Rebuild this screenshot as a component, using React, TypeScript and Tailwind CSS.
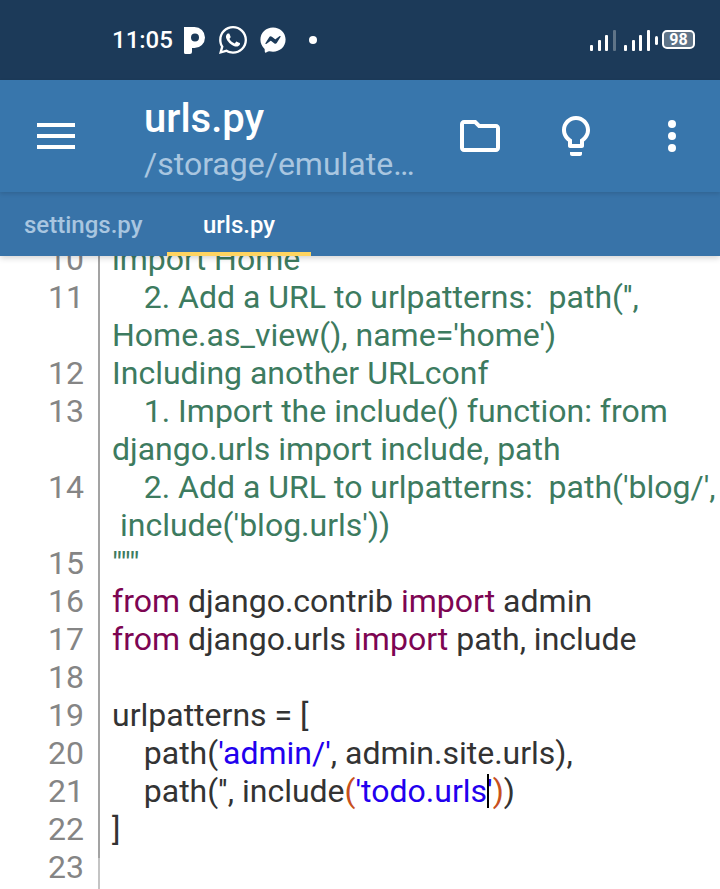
import React from 'react';
import { FaWhatsapp, FaFacebookMessenger } from 'react-icons/fa';

type Seg = { t: string; c?: string };

const GREEN = 'text-[#3d7b5f]';
const DARK = 'text-[#333333]';
const PURPLE = 'text-[#7d0552]';
const BLUE = 'text-[#2200ee]';
const ORANGE = 'text-[#c8501c]';

const green = (t: string): Seg[] => [{ t, c: GREEN }];

const lines: { n?: number; segs: Seg[] }[] = [
  { n: 10, segs: green('import Home') },
  { n: 11, segs: green("    2. Add a URL to urlpatterns:  path('',") },
  { segs: green("Home.as_view(), name='home')") },
  { n: 12, segs: green('Including another URLconf') },
  { n: 13, segs: green('    1. Import the include() function: from') },
  { segs: green('django.urls import include, path') },
  { n: 14, segs: green("    2. Add a URL to urlpatterns:  path('blog/',") },
  { segs: green(" include('blog.urls'))") },
  { n: 15, segs: green('"""') },
  { n: 16, segs: [{ t: 'from', c: PURPLE }, { t: ' django.contrib ' }, { t: 'import', c: PURPLE }, { t: ' admin' }] },
  { n: 17, segs: [{ t: 'from', c: PURPLE }, { t: ' django.urls ' }, { t: 'import', c: PURPLE }, { t: ' path, include' }] },
  { n: 18, segs: [] },
  { n: 19, segs: [{ t: 'urlpatterns = [' }] },
  { n: 20, segs: [{ t: '    path(' }, { t: "'admin/'", c: BLUE }, { t: ', admin.site.urls),' }] },
  {
    n: 21,
    segs: [
      { t: "    path('', include" },
      { t: '(', c: ORANGE },
      { t: "'todo.urls", c: BLUE },
      { t: 'CURSOR' },
      { t: "'", c: BLUE },
      { t: ')', c: ORANGE },
      { t: ')' },
    ],
  },
  { n: 22, segs: [{ t: ']' }] },
  { n: 23, segs: [] },
];

const SignalBars = ({ last }: { last: string }) => (
  <svg width="27" height="21" viewBox="0 0 27 21" fill="white">
    <rect x="0" y="15" width="3" height="6" rx="1" />
    <rect x="8" y="10" width="3" height="11" rx="1" />
    <rect x="15" y="5" width="3" height="16" rx="1" />
    <rect x="23" y="0" width="3" height="21" rx="1" fill={last} />
  </svg>
);

export default function App() {
  return (
    <div className="w-[720px] h-[889px] overflow-hidden bg-white flex flex-col font-['Roboto',sans-serif]">
      {/* status bar */}
      <div className="h-20 shrink-0 bg-[#1c3a59] flex items-center pl-[112px] pr-[25px] text-white">
        <span className="text-[24px] font-medium leading-none">11:05</span>
        <svg width="21" height="27" viewBox="0 0 21 27" fill="white" fillRule="evenodd" className="ml-[11px] mt-[1px]">
          <path d="M0 0H10.5A10.5 10.5 0 0 1 10.5 21H8V25Q8 27 6 27H1.5Q0 27 0 25.5ZM11 6.5A4 4 0 1 0 11 14.5A4 4 0 1 0 11 6.5Z" />
        </svg>
        <FaWhatsapp size={32} className="ml-[12px]" />
        <FaFacebookMessenger size={26} className="ml-[11px]" />
        <span className="ml-[23px] w-2 h-2 rounded-full bg-white" />
        <div className="ml-auto flex items-center gap-[7px]">
          <SignalBars last="#5f7488" />
          <SignalBars last="white" />
          <div className="w-[3px] h-[9px] bg-white rounded-sm -ml-[3px]" />
          <div className="w-[33px] h-[19px] -ml-[3px] -mt-[1px] border-2 border-white rounded-[5px] bg-[#5f7488] flex items-center justify-center text-[16px] font-bold leading-none">
            98
          </div>
        </div>
      </div>

      {/* app bar */}
      <div className="h-28 shrink-0 bg-[#3876ac] flex items-center pr-6 shadow-[0_2px_4px_rgba(0,0,0,0.12)] z-20 text-white">
        <div className="w-[144px] shrink-0 pl-[37px]">
          <div className="w-[38px] flex flex-col gap-[7px]">
            <div className="h-1 bg-white" />
            <div className="h-1 bg-white" />
            <div className="h-1 bg-white" />
          </div>
        </div>
        <div className="flex-1 min-w-0 pt-[8px]">
          <div className="text-[40px] font-medium leading-[48px]">urls.py</div>
          <div className="text-[32px] leading-[42px] text-[#a9c6e0]">/storage/emulate…</div>
        </div>
        <div className="flex gap-12">
          <svg width="48" height="48" viewBox="0 0 24 24" fill="white">
            <path d="M9.17 6l2 2H20v10H4V6h5.17M10 4H4c-1.1 0-1.99.9-1.99 2L2 18c0 1.1.9 2 2 2h16c1.1 0 2-.9 2-2V8c0-1.1-.9-2-2-2h-8l-2-2z" />
          </svg>
          <svg width="48" height="48" viewBox="0 0 24 24" fill="white">
            <path d="M9 21c0 .55.45 1 1 1h4c.55 0 1-.45 1-1v-1H9v1zm3-19C8.14 2 5 5.14 5 9c0 2.38 1.19 4.47 3 5.74V17c0 .55.45 1 1 1h6c.55 0 1-.45 1-1v-2.26c1.81-1.27 3-3.36 3-5.74 0-3.86-3.14-7-7-7zm2.85 11.1l-.85.6V16h-4v-2.3l-.85-.6C7.8 12.16 7 10.63 7 9c0-2.76 2.24-5 5-5s5 2.24 5 5c0 1.63-.8 3.16-2.15 4.1z" />
          </svg>
          <svg width="48" height="48" viewBox="0 0 24 24" fill="white">
            <circle cx="12" cy="6" r="2" />
            <circle cx="12" cy="12" r="2" />
            <circle cx="12" cy="18" r="2" />
          </svg>
        </div>
      </div>

      {/* tabs */}
      <div className="h-16 shrink-0 bg-[#3873a8] flex text-[24px] font-medium z-10 shadow-[0_2px_6px_rgba(0,0,0,0.18)]">
        <div className="w-[167px] flex items-center pl-6 pt-[2px] text-[#a9c6e0]">settings.py</div>
        <div className="w-[144px] flex items-center justify-center text-white border-b-4 border-[#ffd460] pt-[5px]">urls.py</div>
      </div>

      {/* editor */}
      <div className="flex-1 min-h-0 overflow-hidden">
        <div className="-mt-4 w-[720px] text-[32px] leading-[38px]">
          {lines.map((line, i) => (
            <div key={i} className="flex h-[38px]">
              <div className="w-[98px] shrink-0 pr-[14px] text-right text-[#858585]">{line.n}</div>
              {line.n === 23 ? (
                <div className="w-[2px] shrink-0 bg-[linear-gradient(#a3a3a3_10px,#c4c4c4_10px)]" />
              ) : (
                <div className="w-[2px] shrink-0 bg-[#a3a3a3]" />
              )}
              <div className={`pl-[12px] whitespace-pre ${DARK}`}>
                {line.segs.map((s, j) =>
                  s.t === 'CURSOR' ? (
                    <span key={j} className="relative">
                      <span className="absolute left-0 top-[2px] w-[2px] h-[34px] bg-black" />
                    </span>
                  ) : (
                    <span key={j} className={s.c}>
                      {s.t}
                    </span>
                  )
                )}
              </div>
            </div>
          ))}
          <div className="flex h-[38px]">
            <div className="w-[98px] shrink-0" />
            <div className="w-[2px] shrink-0 bg-[#c4c4c4]" />
          </div>
        </div>
      </div>
    </div>
  );
}
